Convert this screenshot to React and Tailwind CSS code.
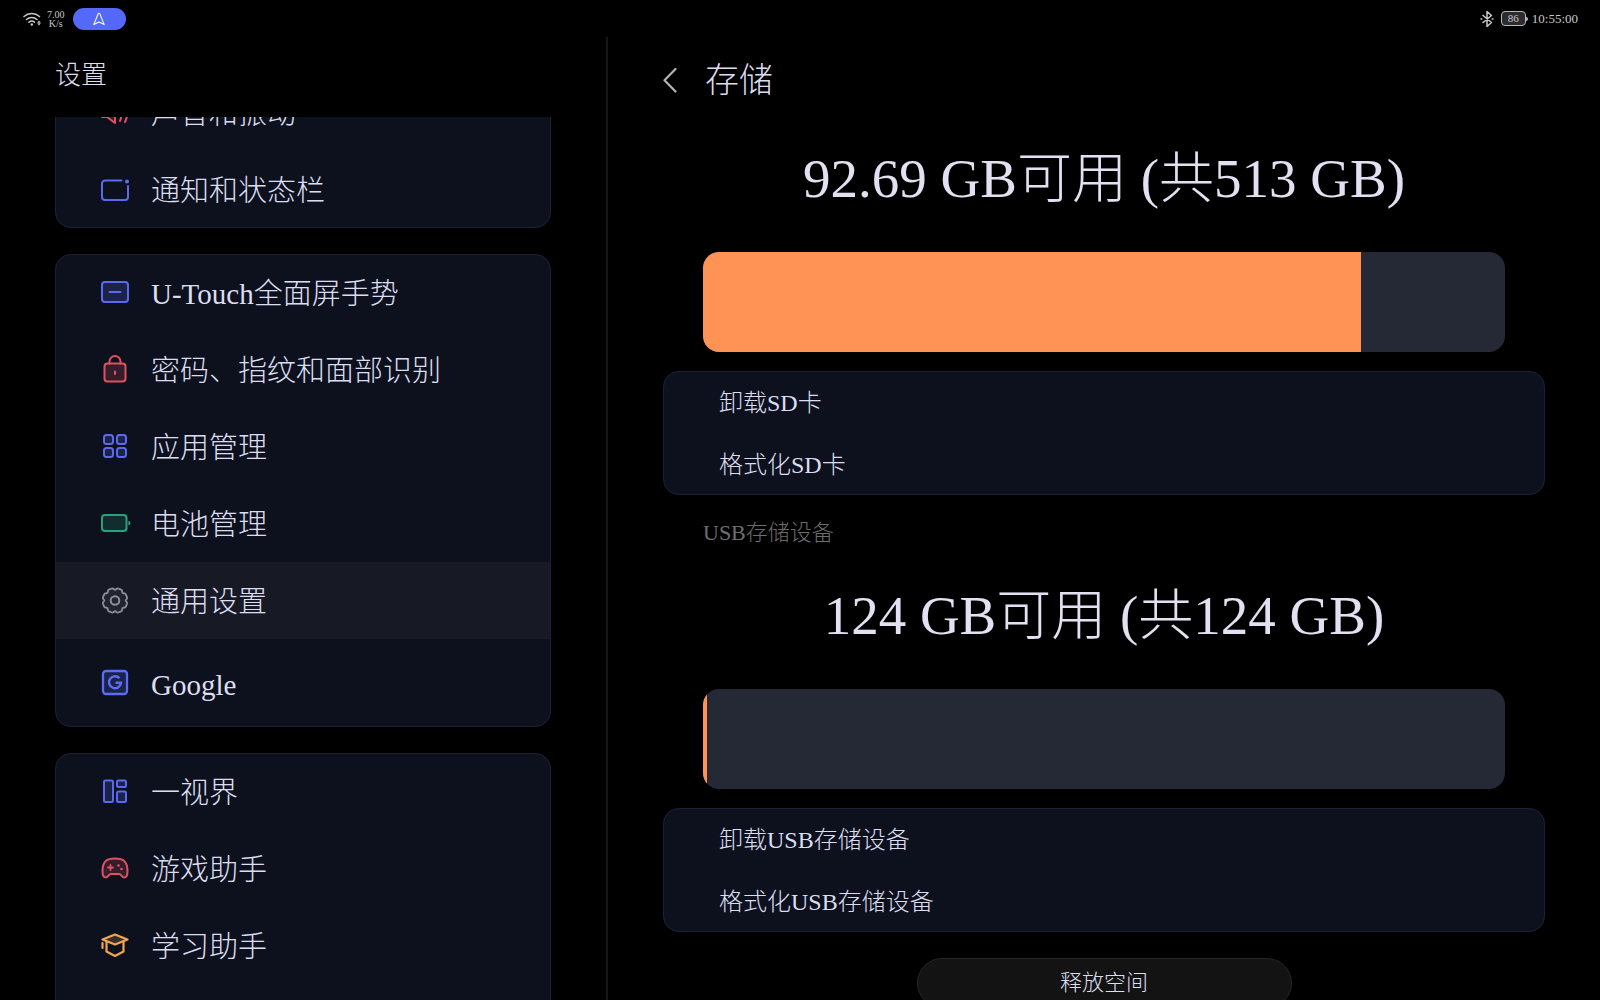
import { clsx } from "clsx";

function Icon({ children, className }) {
  return (
    <svg
      viewBox="0 0 32 32"
      className={clsx("size-8 shrink-0", className)}
      fill="none"
      stroke="currentColor"
      strokeWidth="2"
      strokeLinecap="round"
      strokeLinejoin="round"
      aria-hidden="true"
    >
      {children}
    </svg>
  );
}

const tint = { fill: "currentColor", fillOpacity: 0.2 };

// Cog outline: a circle with eight shallow notches
const cogPoints = Array.from({ length: 96 }, (_, i) => {
  const a = (i / 96) * Math.PI * 2;
  const r = 12.4 - 1.7 * Math.max(0, Math.cos(8 * a)) ** 1.5;
  return `${(16 + r * Math.cos(a)).toFixed(2)},${(15.5 + r * Math.sin(a)).toFixed(2)}`;
}).join(" ");

const SoundIcon = () => (
  <Icon className="text-[#e0505e]">
    <path {...tint} d="M3 11h5l8-6v21l-8-6H3z" />
    <path d="M21 10c2 4 2 9 0 14M26 7c3 6 3 12 0 18" />
  </Icon>
);

const NotifyIcon = () => (
  <Icon className="text-[#5b69ee]">
    <path d="M22.500 6.500H6a3 3 0 0 0-3 3V23a3 3 0 0 0 3 3h20a3 3 0 0 0 3-3V12" />
    <circle cx="28" cy="7.500" r="2" fill="currentColor" stroke="none" />
  </Icon>
);

const TouchIcon = () => (
  <Icon className="text-[#5b69ee]">
    <rect {...tint} x="3" y="5" width="26" height="20" rx="3" />
    <path d="M10.500 15h11" />
  </Icon>
);

const LockIcon = () => (
  <Icon className="text-[#dd5261]">
    <path d="M10.500 9.500V7.500a5.500 5.500 0 0 1 11 0v2" />
    <rect {...tint} x="5.500" y="9.500" width="21" height="18" rx="3" />
    <path d="M16 17.500v2.500" />
  </Icon>
);

const AppsIcon = () => (
  <Icon className="text-[#5b69ee]">
    <rect {...tint} x="5" y="4" width="9" height="9" rx="2.500" />
    <rect {...tint} x="18" y="4" width="9" height="9" rx="2.500" />
    <rect {...tint} x="5" y="17" width="9" height="9" rx="2.500" />
    <rect {...tint} x="18" y="17" width="9" height="9" rx="2.500" />
  </Icon>
);

const BatteryIcon = () => (
  <Icon className="text-[#2aa279]">
    <rect {...tint} x="3" y="7" width="24.500" height="16" rx="3" />
    <path d="M30 13.500a2 2 0 0 1 0 3.200z" fill="currentColor" strokeWidth="1.200" />
  </Icon>
);

const CogIcon = () => (
  <Icon className="text-[#8d8f9b]">
    <polygon {...tint} fillOpacity="0.1" points={cogPoints} strokeWidth="1.800" />
    <circle cx="16" cy="15.500" r="4.300" />
  </Icon>
);

const GoogleIcon = () => (
  <Icon className="text-[#5b6cf5]">
    <rect {...tint} x="4" y="4" width="24" height="23" rx="3" strokeWidth="2.300" />
    <path d="M20.500 11.200a6 6 0 1 0 1.500 4.500h-5.500" strokeWidth="2.500" strokeLinecap="butt" strokeLinejoin="miter" />
  </Icon>
);

const ViewsIcon = () => (
  <Icon className="text-[#5b69ee]">
    <rect {...tint} x="5" y="4.500" width="9" height="21.500" rx="1.500" />
    <rect {...tint} x="18" y="4.500" width="9" height="6.500" rx="1.500" />
    <rect {...tint} x="18" y="15.500" width="9" height="10.500" rx="1.500" />
  </Icon>
);

const GameIcon = () => (
  <Icon className="text-[#dd5261]">
    <path
      {...tint}
      d="M16 5.500c8 0 12.500 2.500 12.500 13 0 3.500-1 6-3.500 6-2.300 0-2.800-3.500-5-3.500h-8c-2.200 0-2.700 3.500-5 3.500-2.500 0-3.500-2.500-3.500-6 0-10.500 4.500-13 12.500-13z"
    />
    <path d="M11.500 12v5M9 14.500h5" strokeWidth="1.800" />
    <g fill="currentColor" stroke="none">
      <circle cx="19.500" cy="12.500" r="1.300" />
      <circle cx="22.500" cy="16" r="1.300" />
    </g>
  </Icon>
);

const StudyIcon = () => (
  <Icon className="text-[#f0a54e]">
    <path {...tint} d="M16 4.500l12.500 5L16 14.500l-12.500-5z" strokeWidth="2.200" />
    <path d="M7.500 11.500V21.500l8.500 4.500 8.500-4.500v-10M3.500 13v5" strokeWidth="2.200" />
  </Icon>
);

const menu = [
  [
    { label: "声音和振动", icon: SoundIcon },
    { label: "通知和状态栏", icon: NotifyIcon },
  ],
  [
    { label: "U-Touch全面屏手势", icon: TouchIcon },
    { label: "密码、指纹和面部识别", icon: LockIcon },
    { label: "应用管理", icon: AppsIcon },
    { label: "电池管理", icon: BatteryIcon },
    { label: "通用设置", icon: CogIcon, active: true },
    { label: "Google", icon: GoogleIcon, tall: true },
  ],
  [
    { label: "一视界", icon: ViewsIcon },
    { label: "游戏助手", icon: GameIcon },
    { label: "学习助手", icon: StudyIcon },
  ],
];

const volumes = [
  {
    summary: "92.69 GB可用 (共513 GB)",
    used: 82,
    actions: ["卸载SD卡", "格式化SD卡"],
  },
  {
    name: "USB存储设备",
    summary: "124 GB可用 (共124 GB)",
    used: 0.5,
    actions: ["卸载USB存储设备", "格式化USB存储设备"],
  },
];

function StatusBar() {
  return (
    <div className="flex h-[37px] shrink-0 items-center justify-between pl-[23px] pr-[22px] text-[#c9c9cc]">
      <div className="flex items-center">
        <svg viewBox="0 0 19 16" className="h-4 w-[19px]" fill="none" stroke="currentColor" strokeWidth="1.5" strokeLinecap="round">
          <path d="M1 5.500c4.500-4 11-4 15.500 0M3.500 8.500c3-2.700 7.500-2.700 10.500 0M6 11.200c1.700-1.400 4-1.400 5.500 0" />
          <circle cx="8.800" cy="13.500" r="1.200" fill="currentColor" stroke="none" />
          <path d="M16 9.500l1.800 2.200h-3.600zM16 14.500l1.800-2.200h-3.600z" fill="currentColor" stroke="none" />
        </svg>
        <div className="ml-[5px] text-center text-[10px] leading-[9px]">
          <div>7.00</div>
          <div>K/s</div>
        </div>
        <button type="button" aria-label="导航" className="ml-2 flex h-[22px] w-[53px] items-center justify-center rounded-full bg-[#5469fa] text-white">
          <svg viewBox="0 0 14 14" className="size-3.5" fill="none" stroke="currentColor" strokeWidth="1.100" strokeLinejoin="round">
            <path d="M7 1.200c-.5 0-.8.400-1 .9L1.800 12.600l5.200-2.600 5.200 2.600L8 2.100c-.2-.5-.5-.9-1-.9z" />
          </svg>
        </button>
      </div>
      <div className="flex items-center">
        <svg viewBox="0 0 14 18" className="mr-[7px] h-[18px] w-3.5" fill="none" stroke="currentColor" strokeWidth="1.500" strokeLinejoin="round">
          <path d="M2.500 5l9 7.500L7 16.500v-15l4.500 4-9 7.500" />
          <path d="M.5 9h1.800M11.700 9h1.800" />
        </svg>
        <div className="flex h-[15px] w-[25px] items-center justify-center rounded-[4px] border border-[#b9b9bc] bg-[#2c2c2e] text-[11px] leading-none">86</div>
        <div className="h-1 w-0.5 rounded-r-sm bg-[#b9b9bc]" />
        <time className="ml-1 text-[13px] leading-4">10:55:00</time>
      </div>
    </div>
  );
}

// The card edge is an outline so that it takes no room from the rows
function Card({ children, className }) {
  return (
    <div className={clsx("overflow-hidden rounded-2xl bg-[#0d111e] outline-1 -outline-offset-1 outline-[#1b2036]", className)}>
      {children}
    </div>
  );
}

function MenuItem({ item }) {
  const ItemIcon = item.icon;
  return (
    <button
      type="button"
      aria-current={item.active ? "page" : undefined}
      className={clsx(
        "flex w-full items-center gap-5 pl-11 text-left text-[29px] leading-none",
        item.tall ? "h-[88px]" : "h-[77px]",
        item.active && "bg-[#171924]"
      )}
    >
      <ItemIcon />
      <span className="pt-1">{item.label}</span>
    </button>
  );
}

function Sidebar() {
  return (
    <aside className="flex min-h-0 flex-col border-r-2 border-[#161616] px-[55px]">
      <h1 className="flex h-20 shrink-0 items-center pb-0.5 text-[26px] leading-none">设置</h1>
      <div className="min-h-0 flex-1 overflow-hidden">
        {/* scrolled partway down the first group */}
        <nav className="-mt-[43px] flex flex-col gap-[26px]">
          {menu.map((group) => (
            <Card key={group[0].label} className="last:pb-20">
              {group.map((item) => (
                <MenuItem key={item.label} item={item} />
              ))}
            </Card>
          ))}
        </nav>
      </div>
    </aside>
  );
}

function Volume({ volume }) {
  return (
    <section>
      {volume.name && (
        <h3 className="flex h-[67px] items-center pl-10 pt-2 text-[22px] leading-none text-[#6d6d70]">{volume.name}</h3>
      )}
      <p className="flex h-[127px] items-center justify-center pb-5 text-[55px] leading-none text-[#e3e0f1]">{volume.summary}</p>
      <div
        role="progressbar"
        aria-label={volume.summary}
        aria-valuenow={volume.used}
        className="mx-10 h-[100px] overflow-hidden rounded-2xl bg-[#252936]"
      >
        <div className="h-full bg-[#ff9254]" style={{ width: `${volume.used}%` }} />
      </div>
      <Card className="mt-[19px]">
        {volume.actions.map((action) => (
          <button key={action} type="button" className="flex h-[62px] w-full items-center pl-14 pt-0.5 text-left text-2xl leading-none">
            {action}
          </button>
        ))}
      </Card>
    </section>
  );
}

export default function App() {
  return (
    <div className="flex h-screen flex-col overflow-hidden bg-black font-['Liberation_Serif','Noto_Sans_CJK_SC',serif] font-light text-[#dcdef0]">
      <StatusBar />
      <div className="grid min-h-0 flex-1 grid-cols-[38%_1fr]">
        <Sidebar />
        <main className="flex min-h-0 flex-col overflow-hidden px-[55px]">
          <header className="flex h-[88px] shrink-0 items-center gap-7">
            <button type="button" aria-label="返回" className="text-[#b4b4b6]">
              <svg viewBox="0 0 14 26" className="h-[26px] w-3.5" fill="none" stroke="currentColor" strokeWidth="2.200" strokeLinecap="round" strokeLinejoin="round">
                <path d="M12.500 1L1.500 12.300l11 11.200" />
              </svg>
            </button>
            <h2 className="text-[34px] leading-none">存储</h2>
          </header>
          {volumes.map((volume) => (
            <Volume key={volume.summary} volume={volume} />
          ))}
          <button
            type="button"
            className="mt-[26px] flex h-[50px] w-[375px] shrink-0 items-center justify-center self-center rounded-full border border-[#262626] bg-[#131313] text-[22px] leading-none"
          >
            释放空间
          </button>
        </main>
      </div>
    </div>
  );
}
